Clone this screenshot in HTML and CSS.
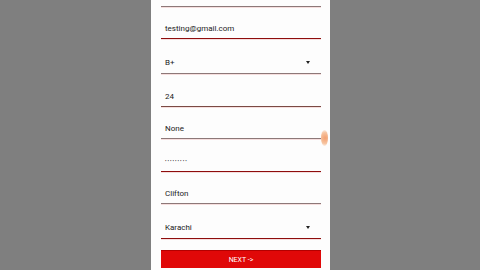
FILE: index.html
```html
<!DOCTYPE html>
<html lang="en">
<head>
    <meta charset="UTF-8">
    <meta name="viewport" content="width=device-width, initial-scale=1.0">
    <title>Register</title>
    <link rel="stylesheet" href="styles.css">
</head>
<body>
    <div class="phone">
        <div class="form">
            <div class="field line-gray"></div>
            <div class="field line-red">testing@gmail.com</div>
            <div class="field select line-gray">B+ <span class="arrow"></span></div>
            <div class="field line-brown">24</div>
            <div class="field line-gray">None</div>
            <div class="field line-red"><span class="dots">•••••••••</span></div>
            <div class="field line-gray">Clifton</div>
            <div class="field select line-red">Karachi <span class="arrow"></span></div>
            <button class="next-btn">NEXT -&gt;</button>
        </div>
        <div class="scroll-thumb"></div>
    </div>
</body>
</html>
```

FILE: styles.css
```css
body {
    margin: 0;
    height: 270px;
    background-color: #7f7f7f;
    font-family: Roboto, "Liberation Sans", sans-serif;
    overflow: hidden;
    display: flex;
    justify-content: center;
}
.phone {
    position: relative;
    width: 179px;
    height: 270px;
    margin-left: 1px;
    background-color: #fdfdfd;
    overflow: hidden;
}
.form {
    display: flex;
    flex-direction: column;
    padding: 0 9px 0 10px;
    margin-top: -26px;
}
.field {
    height: 32.5px;
    box-sizing: border-box;
    display: flex;
    align-items: flex-end;
    justify-content: space-between;
    padding: 0 11px 4px 4px;
    font-size: 8px;
    line-height: 11px;
    color: #222;
    border-bottom: 1px solid #8a1c1c;
    box-shadow: 0 1px 0 #f6dede;
}
.field.select {
    height: 35px;
    padding-bottom: 5px;
}
.line-red {
    border-bottom-color: #8e0d0d;
}
.line-gray {
    border-bottom-color: #8d7878;
}
.line-brown {
    border-bottom-color: #7a4a44;
}
.dots {
    font-size: 4.5px;
    letter-spacing: 1px;
    color: #333;
}
.arrow {
    width: 0;
    height: 0;
    margin-bottom: 4px;
    border-left: 2.5px solid transparent;
    border-right: 2.5px solid transparent;
    border-top: 3px solid #222;
}
.next-btn {
    margin-top: 11px;
    height: 18px;
    border: none;
    border-top: 1px solid #b30000;
    background-color: #e00808;
    color: #fff;
    font-family: Roboto, "Liberation Sans", sans-serif;
    font-size: 7px;
    padding: 0;
}
.scroll-thumb {
    position: absolute;
    right: 2px;
    top: 130px;
    width: 7px;
    height: 16px;
    border-radius: 50%;
    background: radial-gradient(circle at 60% 50%, #f3a070 0%, #f7c4a0 60%, rgba(255,230,210,0) 100%);
}
```
